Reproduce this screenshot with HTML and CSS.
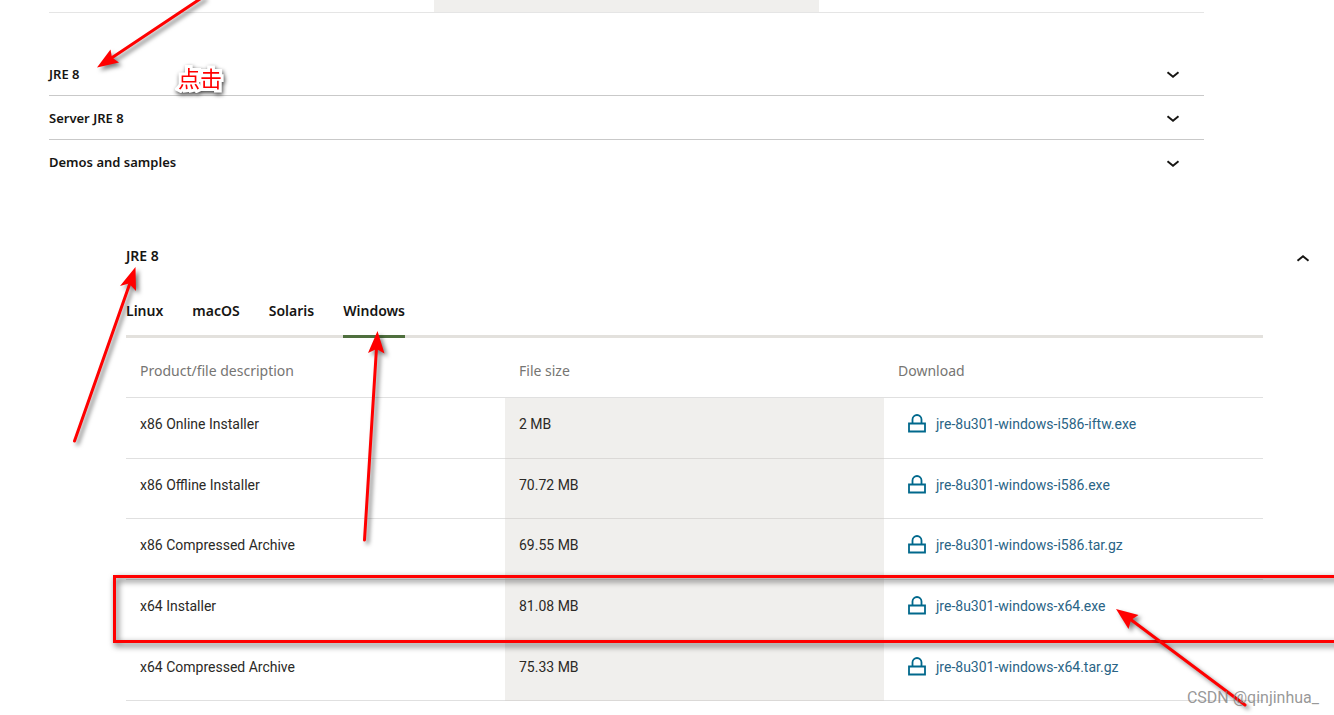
FILE: index.html
```html
<!DOCTYPE html>
<html lang="en">
<head>
<meta charset="utf-8">
<title>Java SE 8 Downloads</title>
<meta name="viewport" content="width=device-width, initial-scale=1">
<link rel="stylesheet" href="styles.css">
</head>
<body>
<svg class="defs" aria-hidden="true">
  <symbol id="chevron" viewBox="0 0 14 8"><path d="M1.500 1.200 7 5.800l5.500-4.600" fill="none" stroke="currentColor" stroke-width="1.900"/></symbol>
  <symbol id="lock" viewBox="0 0 20 20"><path d="M2 9.500h16v8H2zM5.500 9.500V5.500a4.500 4.500 0 0 1 9 0v4" fill="none" stroke="currentColor" stroke-width="1.800"/></symbol>
</svg>
<main class="page">
  <section class="overview">
    <div class="table-end"><span></span></div>
    <div class="accordion">
      <button class="fold" type="button" aria-expanded="false">JRE 8<svg class="chevron"><use href="#chevron"/></svg></button>
      <button class="fold" type="button" aria-expanded="false">Server JRE 8<svg class="chevron"><use href="#chevron"/></svg></button>
      <button class="fold" type="button" aria-expanded="false">Demos and samples<svg class="chevron"><use href="#chevron"/></svg></button>
    </div>
  </section>
  <section class="downloads">
    <button class="fold-open" type="button" aria-expanded="true">JRE 8<svg class="chevron up"><use href="#chevron"/></svg></button>
    <div class="panel">
      <div class="tabs" role="tablist">
        <button class="tab" type="button" role="tab">Linux</button>
        <button class="tab" type="button" role="tab">macOS</button>
        <button class="tab" type="button" role="tab">Solaris</button>
        <button class="tab active" type="button" role="tab" aria-selected="true">Windows</button>
      </div>
      <table class="files">
        <thead><tr><th>Product/file description</th><th>File size</th><th>Download</th></tr></thead>
        <tbody>
          <tr><td>x86 Online Installer</td><td>2 MB</td><td><a class="file" href="#"><svg class="lock"><use href="#lock"/></svg>jre-8u301-windows-i586-iftw.exe</a></td></tr>
          <tr><td>x86 Offline Installer</td><td>70.72 MB</td><td><a class="file" href="#"><svg class="lock"><use href="#lock"/></svg>jre-8u301-windows-i586.exe</a></td></tr>
          <tr><td>x86 Compressed Archive</td><td>69.55 MB</td><td><a class="file" href="#"><svg class="lock"><use href="#lock"/></svg>jre-8u301-windows-i586.tar.gz</a></td></tr>
          <tr><td>x64 Installer</td><td>81.08 MB</td><td><a class="file" href="#"><svg class="lock"><use href="#lock"/></svg>jre-8u301-windows-x64.exe</a></td></tr>
          <tr><td>x64 Compressed Archive</td><td>75.33 MB</td><td><a class="file" href="#"><svg class="lock"><use href="#lock"/></svg>jre-8u301-windows-x64.tar.gz</a></td></tr>
        </tbody>
      </table>
    </div>
  </section>
  <div class="highlight"></div>
  <svg class="arrows" width="1334" height="715" viewBox="0 0 1334 715" aria-hidden="true">
    <g class="arrow"><path class="shaft" d="M203-3 110 59"/><path d="M97 67.500 110.500 49.500 112 57.500 119 62.500z"/></g>
    <g class="arrow"><path class="shaft" d="M74.500 441 130 283"/><path d="M135.500 267 120 286 129 283.500 136 291z"/></g>
    <g class="arrow"><path class="shaft" d="M364.500 540 376.500 348"/><path d="M377.500 331 368 353 376.500 349 384.500 353.500z"/></g>
    <g class="arrow"><path class="shaft" d="M1245 705 1130 619"/><path d="M1116 609 1138.500 615 1131 620 1128.500 629z"/></g>
  </svg>
  <span class="note" lang="zh">点击</span>
  <span class="watermark">CSDN @qinjinhua_</span>
</main>
</body>
</html>
```
FILE: styles.css
```css
* { box-sizing: border-box; }
body {
  margin: 0;
  background: #fff;
  color: #161513;
  font: 14px/20px "Noto Sans", sans-serif;
}
button {
  border: 0;
  padding: 0;
  background: none;
  color: inherit;
  font: inherit;
  font-weight: 600;
  text-align: left;
  cursor: pointer;
}
.defs { position: absolute; width: 0; height: 0; }
.page { position: relative; overflow: hidden; padding-bottom: 14px; }

.overview { margin: 0 130px 0 49px; }
.table-end {
  display: grid;
  grid-template-columns: repeat(3, 1fr);
  height: 13px;
  border-bottom: 1px solid #e5e5e5;
}
.table-end span { grid-column: 2; background: #f0efed; }
.accordion { padding-top: 39px; }
.fold, .fold-open {
  display: flex;
  align-items: center;
  justify-content: space-between;
  width: 100%;
  height: 44px;
}
.fold { padding-right: 24px; font-size: 13px; border-bottom: 1px solid #c9c9c9; }
.fold:last-child { border-bottom: 0; }
.chevron { width: 14px; height: 8px; margin-top: 3px; }
.up { transform: rotate(180deg); }

.downloads { padding: 50px 24px 0 126px; }
.panel { margin-right: 47px; }
.tabs {
  display: flex;
  gap: 29px;
  height: 60px;
  border-bottom: 3px solid #e3e1dd;
}
.tab { height: 60px; padding: 8px 0 0; border-bottom: 3px solid transparent; }
.tab.active { border-color: #4f6f3e; }

.files { width: 100%; border-collapse: separate; border-spacing: 0; table-layout: fixed; }
th, td { padding: 0 14px; text-align: left; border-bottom: 1px solid #e0e0e0; }
th { height: 60px; padding-top: 6px; font-weight: 400; color: #767573; }
td { height: 61px; padding-bottom: 8px; color: #2b2926; font-family: Roboto, sans-serif; }
tr:nth-child(3n+2) td { height: 60px; }
td:nth-child(2) { background: #f0efed; border-color: #dbd9d7; }
.file {
  display: flex;
  align-items: center;
  gap: 9px;
  padding-left: 9px;
  color: #2a6486;
  text-decoration: none;
}
.lock { width: 20px; height: 20px; color: #00688c; }

/* Annotations drawn over the page */
.highlight {
  position: absolute;
  top: 575px;
  left: 113px;
  right: -20px;
  height: 68px;
  border: 3px solid #f00;
  filter: drop-shadow(2px 3px 3px rgba(0, 0, 0, .7));
}
.arrows { position: absolute; top: 0; left: 0; }
.arrow { fill: #f00; filter: drop-shadow(3px 3px 2px rgba(0, 0, 0, .5)); }
.shaft { stroke: #f00; stroke-width: 3; stroke-linecap: round; }
.note {
  position: absolute;
  top: 62px;
  left: 178px;
  color: #f00;
  font: 22px/30px "Noto Sans CJK SC", sans-serif;
  -webkit-text-stroke: 6px #fff;
  stroke-linejoin: round;
  paint-order: stroke fill;
  filter: drop-shadow(1px 2px 2px rgba(0, 0, 0, .75));
}
.watermark {
  position: absolute;
  top: 688px;
  right: 15px;
  color: rgba(125, 125, 125, .8);
  font: 16px/20px Roboto, sans-serif;
}
```
